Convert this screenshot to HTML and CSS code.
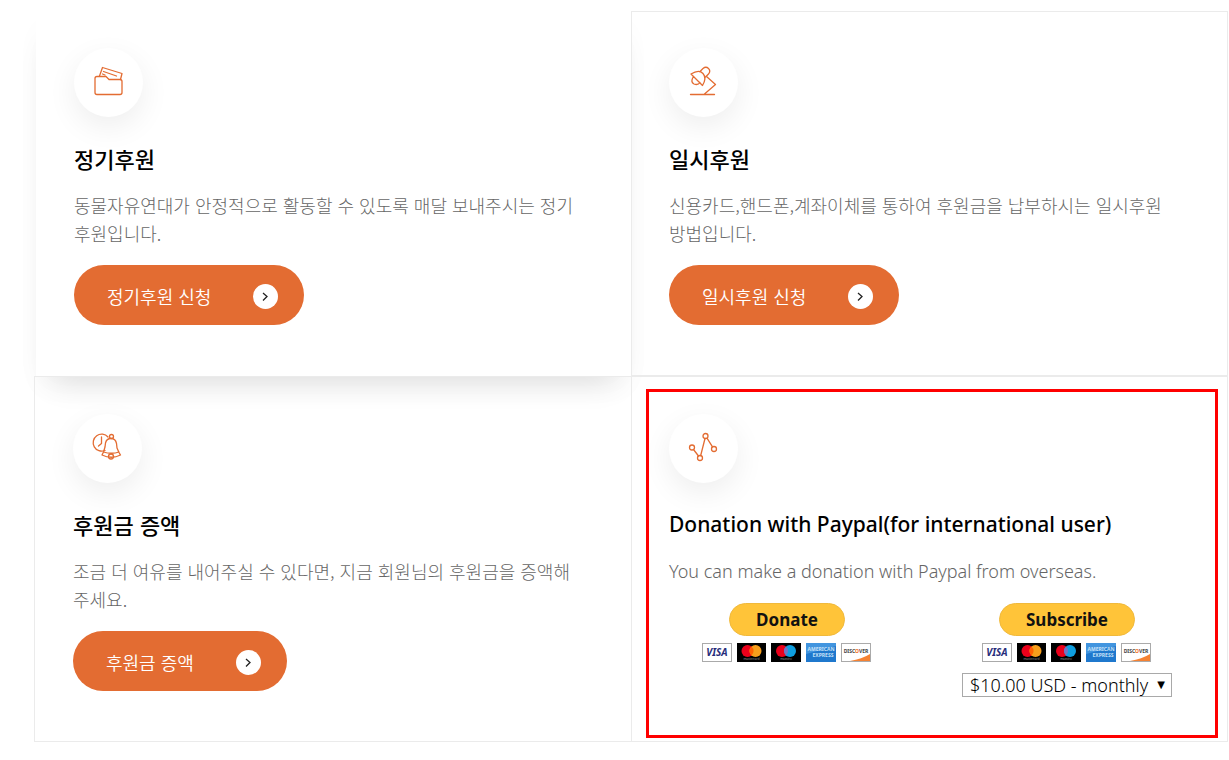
FILE: index.html
```html
<!DOCTYPE html>
<html lang="ko">
<head>
    <meta charset="UTF-8">
    <meta name="viewport" content="width=device-width, initial-scale=1.0">
    <title>후원하기</title>
    <link rel="stylesheet" href="styles.css">
</head>
<body>
    <main class="support-list">
        <section class="support-item active">
            <div class="icon">
                <svg width="34" height="34" viewBox="0 0 34 34">
                    <path d="M4 13.500q0-2 2-2h9l3 3h11q2 0 2 2v11q0 2-2 2H6q-2 0-2-2z"/>
                    <path d="M8.500 11l3-8.500 19.500 6-1.500 6M12.500 6.500l13 4.500M11.500 9l2.500 1"/>
                </svg>
            </div>
            <h2>정기후원</h2>
            <p>동물자유연대가 안정적으로 활동할 수 있도록 매달 보내주시는 정기후원입니다.</p>
            <a class="btn" href="#regular">정기후원 신청
                <svg class="arrow" width="25" height="25" viewBox="0 0 25 25"><circle cx="12.500" cy="12.500" r="12.500"/><path d="M10 9l4 3.500-4 4"/></svg>
            </a>
        </section>

        <section class="support-item">
            <div class="icon">
                <svg width="34" height="34" viewBox="0 0 34 34">
                    <path d="M5 9Q13 4 17 8.500Q21 13 16.500 20.500zM7.500 11.500Q4 17 8 19q4 1.500 6-1.500"/>
                    <path d="M14 6.500l3-3q3-2.500 5.500 0t0 5.500l-3 3M20.500 11.500l9 8-11 9.500M4.500 29.500h24"/>
                </svg>
            </div>
            <h2>일시후원</h2>
            <p>신용카드,핸드폰,계좌이체를 통하여 후원금을 납부하시는 일시후원 방법입니다.</p>
            <a class="btn" href="#once">일시후원 신청
                <svg class="arrow" width="25" height="25" viewBox="0 0 25 25"><circle cx="12.500" cy="12.500" r="12.500"/><path d="M10 9l4 3.500-4 4"/></svg>
            </a>
        </section>

        <section class="support-item">
            <div class="icon">
                <svg width="34" height="34" viewBox="0 0 34 34">
                    <path d="M15 19.500A8.500 8.500 0 1 1 18 6M11.500 6v6.500l-3 2.500"/>
                    <circle cx="21.500" cy="5.500" r="2"/>
                    <path d="M13.500 21l1.500-5 .5-4q1-4.500 5.500-4.500t5.500 5l.5 4.500 2 4.500 1.500 2.500q-9 4.500-18.500 0zM13.500 21q8 2.500 15.500 0"/>
                    <circle cx="21" cy="25.500" r="2.500"/>
                </svg>
            </div>
            <h2>후원금 증액</h2>
            <p>조금 더 여유를 내어주실 수 있다면, 지금 회원님의 후원금을 증액해주세요.</p>
            <a class="btn" href="#increase">후원금 증액
                <svg class="arrow" width="25" height="25" viewBox="0 0 25 25"><circle cx="12.500" cy="12.500" r="12.500"/><path d="M10 9l4 3.500-4 4"/></svg>
            </a>
        </section>

        <section class="support-item marked" lang="en">
            <div class="icon">
                <svg width="34" height="34" viewBox="0 0 34 34">
                    <circle cx="6" cy="16.500" r="2.500"/>
                    <circle cx="14" cy="27" r="2.500"/>
                    <circle cx="19.500" cy="5" r="2.500"/>
                    <circle cx="28" cy="18" r="2.500"/>
                    <path d="M7.500 18.500l5 6.500M14.700 24.500L19 7.500M21 7.200l5.500 8.600"/>
                </svg>
            </div>
            <h2>Donation with Paypal(for international user)</h2>
            <p>You can make a donation with Paypal from overseas.</p>
            <div class="paypal">
                <form class="pay-form">
                    <button type="button" class="pay-btn">Donate</button>
                    <svg class="cards" width="170" height="20" viewBox="0 0 170 20">
                        <g id="pay-cards">
                            <rect x=".5" y=".5" width="29" height="18" fill="#fff" stroke="#aaa"/>
                            <text x="15" y="13" text-anchor="middle" font-size="10" font-weight="700" font-style="italic" fill="#262d7a">VISA</text>
                            <rect x="35" width="29" height="19" fill="#000"/>
                            <circle cx="45.500" cy="8" r="6" fill="#eb001b"/>
                            <circle cx="53.500" cy="8" r="6" fill="#f79e1b"/>
                            <path d="M49.500 3.500a6 6 0 0 1 0 9a6 6 0 0 1 0-9z" fill="#ff5f00"/>
                            <text x="49.500" y="17" text-anchor="middle" font-size="3" fill="#999">mastercard</text>
                            <rect x="69" width="30" height="19" fill="#000"/>
                            <circle cx="80" cy="8" r="6" fill="#eb001b"/>
                            <circle cx="88" cy="8" r="6" fill="#0f9fe0"/>
                            <path d="M84 3.500a6 6 0 0 1 0 9a6 6 0 0 1 0-9z" fill="#7673c0"/>
                            <text x="84" y="17" text-anchor="middle" font-size="3" fill="#999">maestro</text>
                            <rect x="104" width="30" height="19" fill="#1f78cd"/>
                            <path d="M104 0h30v3l-30 8z" fill="#4295df"/>
                            <text x="119" y="8" text-anchor="middle" font-size="5" font-weight="700" fill="#c5e0f7">AMERICAN</text>
                            <text x="121" y="14" text-anchor="middle" font-size="5" font-weight="700" fill="#c5e0f7">EXPRESS</text>
                            <rect x="139.500" y=".5" width="29" height="18" fill="#fff" stroke="#aaa"/>
                            <path d="M168 11v7h-20q12-2 20-7z" fill="#f58233"/>
                            <text x="154" y="10" text-anchor="middle" font-size="5" font-weight="700" fill="#444">DISC<tspan fill="#f36b21">O</tspan>VER</text>
                        </g>
                    </svg>
                </form>
                <form class="pay-form">
                    <button type="button" class="pay-btn">Subscribe</button>
                    <svg class="cards" width="170" height="20" viewBox="0 0 170 20"><use href="#pay-cards"/></svg>
                    <div class="select-box">
                        <select aria-label="Monthly amount">
                            <option>$10.00 USD - monthly</option>
                        </select>
                    </div>
                </form>
            </div>
        </section>
    </main>
</body>
</html>
```
FILE: styles.css
```css
* { box-sizing: border-box; }
body { margin: 0; background: #fff; color: #000; font-family: "Noto Sans CJK KR", sans-serif; }

.support-list { display: grid; grid-template-columns: 1fr 1fr; padding: 11px 1px 18px 34px; }
.support-item { border: 1px solid #ebebeb; padding: 36px 46px 50px 37px; }
.support-item:nth-child(odd) { border-right: none; padding-left: 38px; }
.support-item:nth-child(n+3) { padding-top: 37px; }
.support-item.active { border-color: transparent; margin-left: 2px; padding-left: 37px; box-shadow: 0 14px 30px rgba(0, 0, 0, 0.02), 0 20px 30px -16px rgba(0, 0, 0, 0.14); }

.icon { display: flex; align-items: center; justify-content: center; width: 69px; height: 69px; padding: 0 1px 1px 0; border-radius: 50%; background: #fff; box-shadow: 0 10px 30px rgba(0, 0, 0, 0.07); }
.icon svg { fill: none; stroke: #e36c32; stroke-width: 1.3; stroke-linejoin: round; stroke-linecap: round; }

h2 { margin: 25px 0 17px; font-size: 22px; line-height: 32px; font-weight: 500; }
p { margin: 0; font-size: 18px; line-height: 28px; font-weight: 300; color: #666; }

.btn { display: inline-flex; align-items: center; gap: 42px; height: 60px; margin-top: 18px; padding: 2px 26px 0 33px; border-radius: 30px; background: #e36c32; color: #fff; font-size: 18px; font-weight: 350; text-decoration: none; vertical-align: top; }
.arrow { fill: #fff; }
.arrow path { fill: none; stroke: #222; stroke-width: 1.3; }

/* Paypal */
.marked { position: relative; padding-bottom: 44px; font-family: "Noto Sans", sans-serif; }
.marked::after { content: ""; position: absolute; top: 12px; right: 9px; bottom: 3px; left: 14px; border: 3px solid #f00; pointer-events: none; }
.marked h2 { font-size: 21px; }
.paypal { display: flex; gap: 90px; padding: 18px 0 0 33px; }
.pay-form { display: flex; flex-direction: column; align-items: center; }
.pay-btn { height: 33px; padding: 0 26px; border: 1px solid #f0b93c; border-radius: 17px; background: #ffc439; font-family: "Noto Sans", sans-serif; font-size: 17px; font-weight: 700; line-height: 30px; color: #111; cursor: pointer; }
.cards { margin-top: 7px; }
.select-box { position: relative; margin-top: 10px; }
.select-box::after { content: "▼"; position: absolute; top: 6px; right: 7px; font-family: "DejaVu Sans", sans-serif; font-size: 10px; line-height: 12px; pointer-events: none; }
select { appearance: none; display: block; height: 24px; padding: 0 22px 0 7px; border: 1px solid #a9a9a9; border-radius: 0; background: #fff; font-family: "Noto Sans", sans-serif; font-size: 18px; line-height: 22px; font-weight: 300; color: #000; }
```
